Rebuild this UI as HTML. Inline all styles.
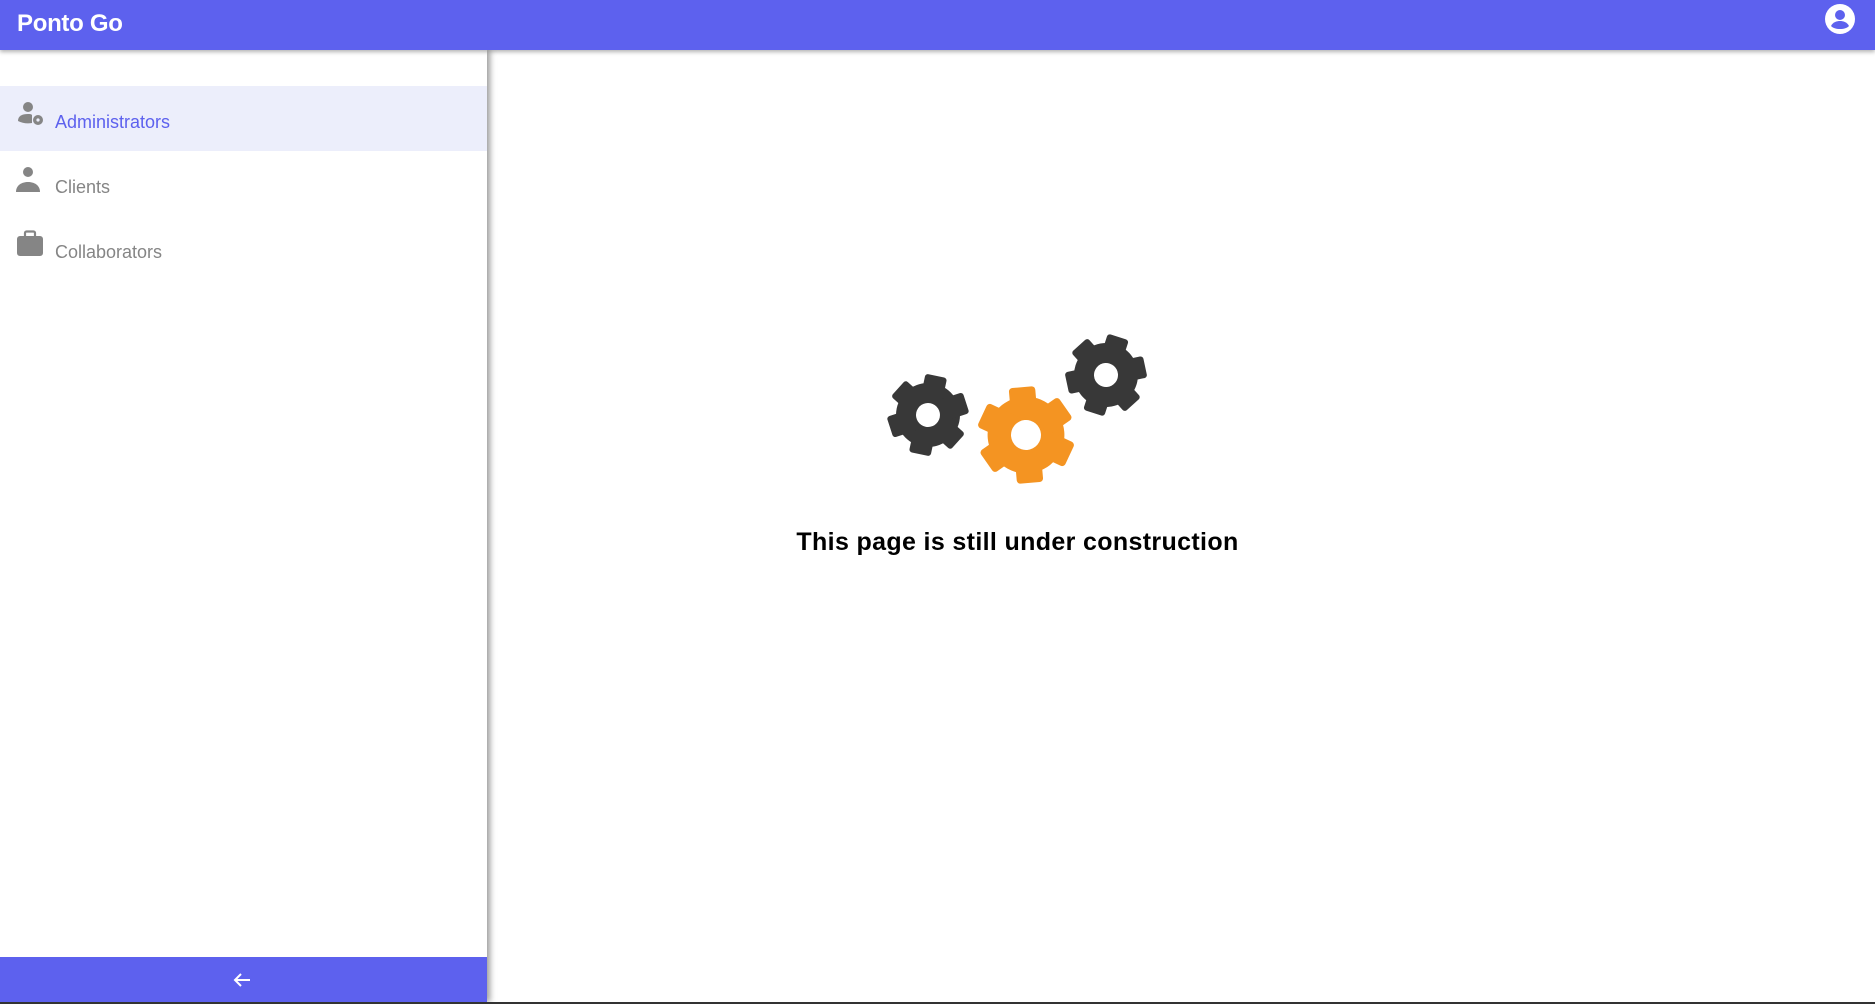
<!DOCTYPE html>
<html><head><style>
html,body{margin:0;padding:0;width:1875px;height:1004px;overflow:hidden;background:#fff;font-family:"Liberation Sans",sans-serif}
.top{position:absolute;left:0;top:0;width:1875px;height:50px;background:#5d61ee;box-shadow:0 2px 4px rgba(0,0,0,.3);z-index:3}
.logo{position:absolute;left:17px;top:10px;color:#fff;font-weight:bold;font-size:24px;letter-spacing:-0.3px}
.side{position:absolute;left:0;top:50px;width:487px;height:952px;background:#fff;box-shadow:3px 0 6px rgba(0,0,0,.4);z-index:2}
.item{position:absolute;left:0;width:487px;height:65px;color:#858585;font-size:18px}
.item span{position:absolute;left:55px;top:26px}
.item svg{position:absolute;left:16px}
.act{background:#eceefb;color:#5d61ee}
.bot{position:absolute;left:0;bottom:0;width:487px;height:45px;background:#5d61ee}
.line{position:absolute;left:0;top:1002px;width:1875px;height:2px;background:#333;z-index:4}
.msg{position:absolute;left:0;width:1875px;top:528px;text-align:center;font-weight:bold;font-size:25px;letter-spacing:0.35px;color:#000;padding-left:160px;box-sizing:border-box}
</style></head><body>
<div class="top"><div class="logo">Ponto Go</div>
<svg style="position:absolute;left:1824px;top:3px" width="32" height="32" viewBox="0 0 32 32"><circle cx="16" cy="16" r="15" fill="#fff"/><circle cx="16" cy="12" r="5" fill="#5d61ee"/><path d="M7 23c2-4 6-5 9-5s7 1 9 5c-2 2-5 3-9 3s-7-1-9-3z" fill="#5d61ee"/></svg>
</div>
<div class="side">
<div class="item act" style="top:36px"><svg style="top:15px" width="28" height="28" viewBox="0 0 28 28"><circle cx="12" cy="6" r="5" fill="#858585"/><path d="M2 20c0-5 4-7 10-7 2 0 3 0 4 1v8c-5 1-10 0-14-2z" fill="#858585"/><circle cx="22" cy="19" r="5" fill="#858585"/><circle cx="22" cy="19" r="1.6" fill="#eceefb"/></svg><span>Administrators</span></div>
<div class="item" style="top:101px"><svg style="top:15px" width="28" height="28" viewBox="0 0 28 28"><circle cx="12" cy="6" r="5" fill="#858585"/><path d="M0 26c0-7 6-10 12-10s12 3 12 10z" fill="#858585"/></svg><span>Clients</span></div>
<div class="item" style="top:166px"><svg style="top:14px" width="28" height="28" viewBox="0 0 28 28"><rect x="1" y="6" width="26" height="20" rx="3" fill="#858585"/><rect x="9" y="1.5" width="10" height="6" rx="1.5" fill="none" stroke="#858585" stroke-width="2.2"/></svg><span>Collaborators</span></div>
<div class="bot"><svg style="position:absolute;left:231px;top:12px" width="22" height="22" viewBox="0 0 22 22"><path d="M19 11H4M10 5l-6 6 6 6" stroke="#fff" stroke-width="2" fill="none"/></svg></div>
</div>
<svg style="position:absolute;left:860px;top:320px" width="300" height="180" viewBox="860 320 300 180">
<defs>
<g id="g"><circle r="32" /><rect x="-11" y="-40" width="22" height="80" rx="3"/><rect x="-11" y="-40" width="22" height="80" rx="3" transform="rotate(60)"/><rect x="-11" y="-40" width="22" height="80" rx="3" transform="rotate(120)"/></g>
</defs>
<g fill="#383838" transform="translate(928,415) rotate(12)"><use href="#g"/><circle r="12" fill="#fff"/></g>
<g fill="#f49422" transform="translate(1026,435) rotate(-5) scale(1.2)"><use href="#g"/><circle r="12.5" fill="#fff"/></g>
<g fill="#383838" transform="translate(1106,375) rotate(18)"><use href="#g"/><circle r="12" fill="#fff"/></g>
</svg>
<div class="msg">This page is still under construction</div>
<div class="line"></div>
</body></html>
